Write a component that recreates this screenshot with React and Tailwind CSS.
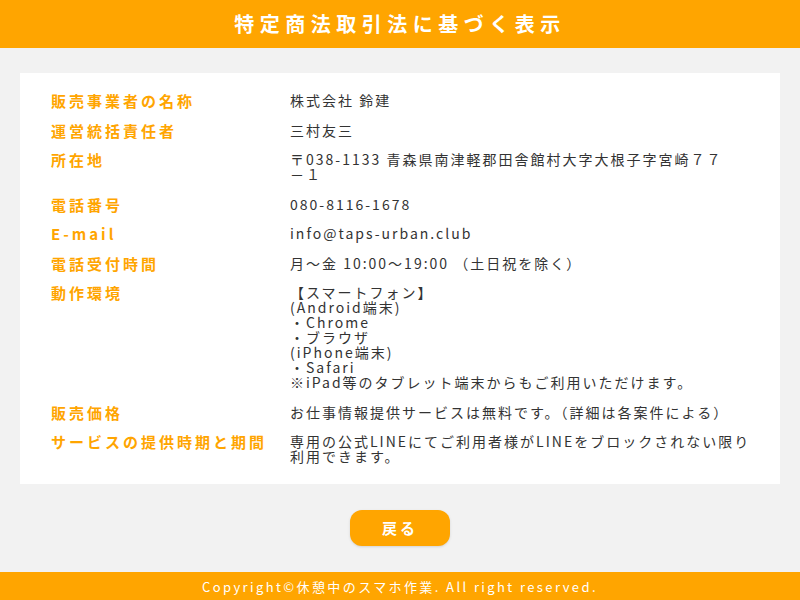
const rows = [
    { label: "販売事業者の名称", value: ["株式会社 鈴建"] },
    { label: "運営統括責任者", value: ["三村友三"] },
    { label: "所在地", value: ["〒038-1133 青森県南津軽郡田舎館村大字大根子字宮崎７７", "－１"] },
    { label: "電話番号", value: ["080-8116-1678"] },
    { label: "E-mail", value: ["info@taps-urban.club"] },
    { label: "電話受付時間", value: ["月〜金 10:00〜19:00 （土日祝を除く）"] },
    {
        label: "動作環境",
        value: [
            "【スマートフォン】",
            "(Android端末)",
            "・Chrome",
            "・ブラウザ",
            "(iPhone端末)",
            "・Safari",
            "※iPad等のタブレット端末からもご利用いただけます。",
        ],
    },
    { label: "販売価格", value: ["お仕事情報提供サービスは無料です。（詳細は各案件による）"] },
    { label: "サービスの提供時期と期間", value: ["専用の公式LINEにてご利用者様がLINEをブロックされない限り", "利用できます。"] },
];

const App = () => {
    return (
        <div
            className="min-h-[600px] flex flex-col bg-[#f2f2f2]"
            style={{ fontFamily: '"Noto Sans CJK JP", "Noto Sans", sans-serif' }}
        >
            <header className="h-12 bg-[#ffa500] flex items-center justify-center">
                <h1 className="text-white font-bold text-[20px] tracking-[5.5px] leading-none">
                    特定商法取引法に基づく表示
                </h1>
            </header>

            <main className="flex-1 flex flex-col items-center">
                <div className="mt-[25px] mx-5 self-stretch bg-white pl-[31px] pr-[20px] pt-[20px] pb-[20px] flex flex-col gap-[14.5px]">
                    {rows.map((r) => (
                        <div key={r.label} className="flex">
                            <div className="w-[239px] shrink-0 text-[#ffa500] font-bold text-[15px] tracking-[3px] leading-[15px]">
                                {r.label}
                            </div>
                            <div className="flex-1 text-[#333] text-[14px] tracking-[2px] leading-[15px]">
                                {r.value.map((line, i) => (
                                    <div key={i} className="whitespace-nowrap">{line}</div>
                                ))}
                            </div>
                        </div>
                    ))}
                </div>

                <button className="mt-[26px] mb-[26px] w-[100px] h-9 rounded-xl bg-[#ffa500] text-white font-bold text-[15px] tracking-[3px] shadow-sm">
                    戻る
                </button>
            </main>

            <footer className="h-7 bg-[#ffa500] flex items-center justify-center">
                <p className="text-white text-[13px] tracking-[2.4px] leading-none">
                    Copyright©休憩中のスマホ作業. All right reserved.
                </p>
            </footer>
        </div>
    );
};

export default App;
